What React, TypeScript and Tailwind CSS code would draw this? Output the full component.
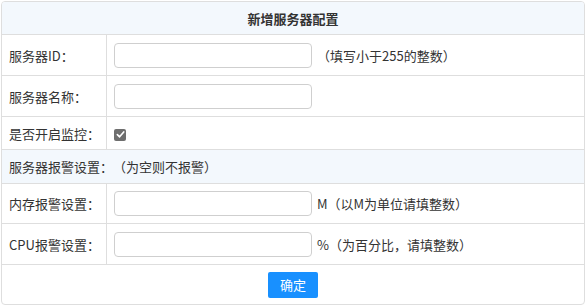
import React from "react";

const font = { fontFamily: '"Noto Sans CJK SC", "Noto Sans", sans-serif' };

function Input() {
  return (
    <div className="w-[198px] h-[25px] border border-[#cfcfcf] rounded-[4px] bg-white" />
  );
}

function Row({
  label,
  children,
  h,
}: {
  label: string;
  children?: React.ReactNode;
  h: string;
}) {
  return (
    <div className={`flex border-b border-[#dedede] ${h}`}>
      <div className="w-[105px] shrink-0 border-r border-[#dedede] flex items-center pl-[7px]">
        {label}
      </div>
      <div className="flex items-center pl-[7px]">{children}</div>
    </div>
  );
}

export default function App() {
  return (
    <div className="bg-white w-[586px] h-[306px] pt-px pl-px" style={font}>
      <div className="w-[584px] border border-[#dedede] rounded-[4px] overflow-hidden text-[13px] text-[#333] leading-none [text-spacing-trim:space-all]">
        <div className="h-[33px] border-b border-[#dedede] bg-[#f3f8fd] flex items-center justify-center font-bold">
          新增服务器配置
        </div>
        <Row label="服务器ID：" h="h-[41px]">
          <Input />
          <span className="ml-[5px]">（填写小于255的整数）</span>
        </Row>
        <Row label="服务器名称：" h="h-[41px]">
          <Input />
        </Row>
        <Row label="是否开启监控：" h="h-[33px]">
          <span className="w-[12px] h-[12px] mt-[3px] rounded-[2px] bg-[#6e6e6e] flex items-center justify-center">
            <svg width="9" height="9" viewBox="0 0 10 10">
              <path
                d="M1.5 5.2 L4 7.6 L8.6 2.2"
                fill="none"
                stroke="white"
                strokeWidth="1.8"
                strokeLinecap="round"
                strokeLinejoin="round"
              />
            </svg>
          </span>
        </Row>
        <div className="h-[34px] border-b border-[#dedede] bg-[#f3f8fd] flex items-center pl-[7px]">
          服务器报警设置：（为空则不报警）
        </div>
        <Row label="内存报警设置：" h="h-[40px]">
          <Input />
          <span className="ml-[5px]">M（以M为单位请填整数）</span>
        </Row>
        <Row label="CPU报警设置：" h="h-[41px]">
          <Input />
          <span className="ml-[5px]">%（为百分比，请填整数）</span>
        </Row>
        <div className="h-[39px] flex items-center justify-center">
          <button className="w-[50px] h-[26px] bg-[#1890ff] text-white rounded-[2px] text-[13px] leading-none">
            确定
          </button>
        </div>
      </div>
    </div>
  );
}
